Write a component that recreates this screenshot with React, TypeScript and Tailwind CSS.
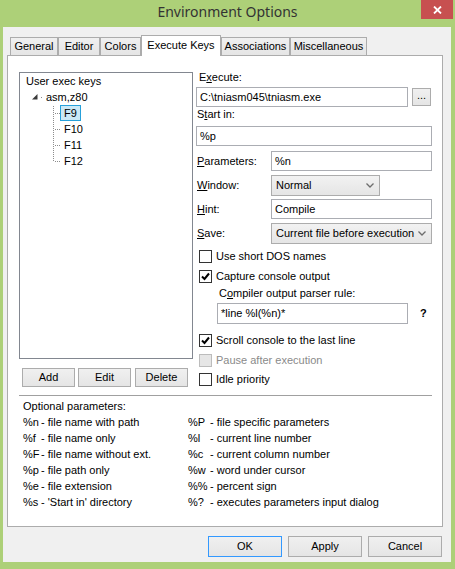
import type { ReactNode } from 'react';

const tabs = [
  { label: 'General', w: 'w-[48px]' },
  { label: 'Editor', w: 'w-[42px]' },
  { label: 'Colors', w: 'w-[41px]' },
  { label: 'Execute Keys', w: 'w-[80px]', active: true },
  { label: 'Associations', w: 'w-[69px]' },
  { label: 'Miscellaneous', w: 'w-[77px]' },
];

const leftParams = [
  ['%n', '- file name with path'],
  ['%f', '- file name only'],
  ['%F', '- file name without ext.'],
  ['%p', '- file path only'],
  ['%e', '- file extension'],
  ['%s', "- 'Start in' directory"],
];

const rightParams = [
  ['%P', '- file specific parameters'],
  ['%l', '- current line number'],
  ['%c', '- current column number'],
  ['%w', '- word under cursor'],
  ['%%', '- percent sign'],
  ['%?', '- executes parameters input dialog'],
];

// text with one accelerator letter underlined
function Acc({ text, i }: { text: string; i: number }) {
  return <>{text.slice(0, i)}<span className="underline underline-offset-[1px]">{text[i]}</span>{text.slice(i + 1)}</>;
}

function Input({ value, className }: { value: string; className: string }) {
  return <div className={`flex h-[20px] items-center border border-[#abadb3] bg-white pl-[3px] ${className}`}>{value}</div>;
}

function Select({ value, className }: { value: string; className: string }) {
  return <div className={`flex h-[21px] items-center justify-between border border-[#acacac] bg-linear-to-b from-[#f2f2f2] to-[#e5e5e5] pl-[4px] pr-[5px] ${className}`}>
    <span>{value}</span>
    <svg width="8" height="5" viewBox="0 0 8 5"><path d="M0.5 0.5 L4 4 L7.5 0.5" fill="none" stroke="#6d6d6d" strokeWidth="1.3" /></svg>
  </div>;
}

function Check({ label, checked, disabled, className }: { label: string; checked?: boolean; disabled?: boolean; className: string }) {
  return <div className={`flex h-[16px] items-center pl-[3px] ${className}`}>
    <span className={`grid h-[13px] w-[13px] place-items-center border ${disabled ? 'border-[#bcbcbc] bg-[#e6e6e6]' : 'border-[#333333] bg-white'}`}>
      {checked && <svg width="9" height="9" viewBox="0 0 9 9"><path d="M1 4.5 L3.5 7 L8 1.5" fill="none" stroke="#000" strokeWidth="2" /></svg>}
    </span>
    <span className={`ml-[4px] ${disabled ? 'text-[#8a8a8a]' : ''}`}>{label}</span>
  </div>;
}

function Button({ children, className }: { children: ReactNode; className: string }) {
  return <div className={`grid place-items-center border bg-linear-to-b from-[#f0f0f0] to-[#e5e5e5] ${className}`}>{children}</div>;
}

function Tree() {
  const dotsV = [];
  for (let y = 33; y <= 87; y += 2) dotsV.push(<rect key={'v' + y} x={33} y={y} width={1} height={1} />);
  const dotsH = [];
  for (const y of [40, 56, 72, 88]) for (let x = 35; x <= 39; x += 2) dotsH.push(<rect key={`h${x}-${y}`} x={x} y={y} width={1} height={1} />);
  return <div className="relative h-[287px] border border-[#828790] bg-white">
    <svg className="absolute left-0 top-0" width="60" height="100" shapeRendering="crispEdges" fill="#8c8c8c">
      {dotsV}{dotsH}<rect x={21} y={24} width={1} height={1} />
    </svg>
    <div className="flex h-[16px] items-center pl-[6px]">User exec keys</div>
    <div className="flex h-[16px] items-center pl-[12px]">
      <svg width="6" height="6" viewBox="0 0 6 6"><polygon points="5.5,0 5.5,5.5 0,5.5" fill="#3a3a3a" /></svg>
      <span className="ml-[8px]">asm,z80</span>
    </div>
    {['F9', 'F10', 'F11', 'F12'].map((k, i) => (
      <div key={k} className="flex h-[16px] items-center pl-[40px]">
        <span className={`flex h-[16px] items-center border px-[3px] ${i === 0 ? 'border-[#26a0da] bg-[#cbe8f6]' : 'border-transparent'}`}>{k}</span>
      </div>
    ))}
  </div>;
}

export default function App() {
  return (
    <div className="flex h-[569px] w-[455px] flex-col bg-[#add078] font-['Liberation_Sans',Arial,sans-serif] text-[11px] leading-[13px] text-black">
      <div className="flex h-[27px] shrink-0 items-start">
        <div className="w-[34px]" />
        <div className="mt-[3px] flex-1 text-center font-['Noto_Sans',sans-serif] text-[14px] leading-[18px] text-[#333333]">Environment Options</div>
        <div className="mr-[2px] grid h-[19px] w-[32px] place-items-center bg-[#c75050]">
          <svg width="9" height="8" viewBox="0 0 9 8"><path d="M1 0.5 L8 7.5 M8 0.5 L1 7.5" stroke="#fff" strokeWidth="1.8" /></svg>
        </div>
      </div>

      <div className="mb-[7px] ml-[3px] mr-[4px] flex flex-1 flex-col bg-[#f0f0f0]">
        <div className="ml-[7px] mt-[8px] flex h-[20px] items-end">
          {tabs.map(t => t.active ? (
            <div key={t.label} className={`relative z-10 -mb-px flex h-[21px] items-center justify-center border border-b-0 border-[#acacac] bg-white pb-[2px] ${t.w}`}>{t.label}</div>
          ) : (
            <div key={t.label} className={`flex h-[18px] items-center justify-center border border-b-0 border-[#acacac] bg-linear-to-b from-[#f0f0f0] to-[#e5e5e5] ${t.w}`}>{t.label}</div>
          ))}
        </div>

        <div className="ml-[4px] h-[472px] w-[436px] border border-[#acacac] bg-white">
          <div className="flex pl-[11px]">
            <div className="mt-[16px] w-[174px]">
              <Tree />
              <div className="mt-[9px] flex pl-[3px]">
                <Button className="h-[19px] w-[53px] border-[#acacac]">Add</Button>
                <Button className="ml-[3px] h-[19px] w-[53px] border-[#acacac]">Edit</Button>
                <Button className="ml-[4px] h-[19px] w-[53px] border-[#acacac]">Delete</Button>
              </div>
            </div>

            <div className="ml-[3px] mt-[15px] w-[236px]">
              <div className="h-[13px] pl-[3px]"><Acc text="Execute:" i={1} /></div>
              <div className="mt-[3px] flex items-center">
                <Input value="C:\tniasm045\tniasm.exe" className="w-[212px]" />
                <Button className="ml-[4px] h-[18px] w-[19px] border-[#acacac] pb-[3px]">...</Button>
              </div>
              <div className="mt-[1px] h-[13px] pl-[1px]"><Acc text="Start in:" i={1} /></div>
              <Input value="%p" className="mt-[5px] w-[236px]" />
              <div className="mt-[5px] flex items-center">
                <div className="w-[75px] pl-[1px]"><Acc text="Parameters:" i={0} /></div>
                <Input value="%n" className="w-[161px]" />
              </div>
              <div className="mt-[4px] flex items-center">
                <div className="w-[75px] pl-[1px]"><Acc text="Window:" i={0} /></div>
                <Select value="Normal" className="w-[109px]" />
              </div>
              <div className="mt-[3px] flex items-center">
                <div className="w-[75px] pl-[1px]"><Acc text="Hint:" i={0} /></div>
                <Input value="Compile" className="w-[161px]" />
              </div>
              <div className="mt-[4px] flex items-center">
                <div className="w-[75px] pl-[1px]"><Acc text="Save:" i={0} /></div>
                <Select value="Current file before execution" className="w-[161px]" />
              </div>
              <Check label="Use short DOS names" className="mt-[4px]" />
              <Check label="Capture console output" checked className="mt-[4px]" />
              <div className="mt-[3px] h-[13px] pl-[23px]"><Acc text="Compiler output parser rule:" i={1} /></div>
              <div className="mt-[3px] flex items-center pl-[21px]">
                <Input value="*line %l(%n)*" className="h-[21px] w-[191px]" />
                <span className="ml-[12px] font-bold">?</span>
              </div>
              <Check label="Scroll console to the last line" checked className="mt-[8px]" />
              <Check label="Pause after execution" disabled className="mt-[4px]" />
              <Check label="Idle priority" className="mt-[3px]" />
            </div>
          </div>

          <div className="ml-[11px] mt-[8px] h-px w-[413px] bg-[#a0a0a0]" />

          <div className="ml-[15px] mt-[3px]">
            <div className="flex h-[15px] items-center">Optional parameters:</div>
            <div className="flex">
              <div className="w-[165px]">
                {leftParams.map(([k, d]) => (
                  <div key={k} className="flex h-[16px] items-center whitespace-nowrap"><span className="w-[18px] shrink-0">{k}</span><span>{d}</span></div>
                ))}
              </div>
              <div>
                {rightParams.map(([k, d]) => (
                  <div key={k} className="flex h-[16px] items-center whitespace-nowrap"><span className="w-[22px] shrink-0">{k}</span><span>{d}</span></div>
                ))}
              </div>
            </div>
          </div>
        </div>

        <div className="mt-[9px] flex justify-end pr-[9px]">
          <Button className="h-[21px] w-[74px] border-[#3399ff]">OK</Button>
          <Button className="ml-[6px] h-[21px] w-[74px] border-[#acacac]">Apply</Button>
          <Button className="ml-[6px] h-[21px] w-[74px] border-[#acacac]">Cancel</Button>
        </div>
      </div>
    </div>
  );
}
